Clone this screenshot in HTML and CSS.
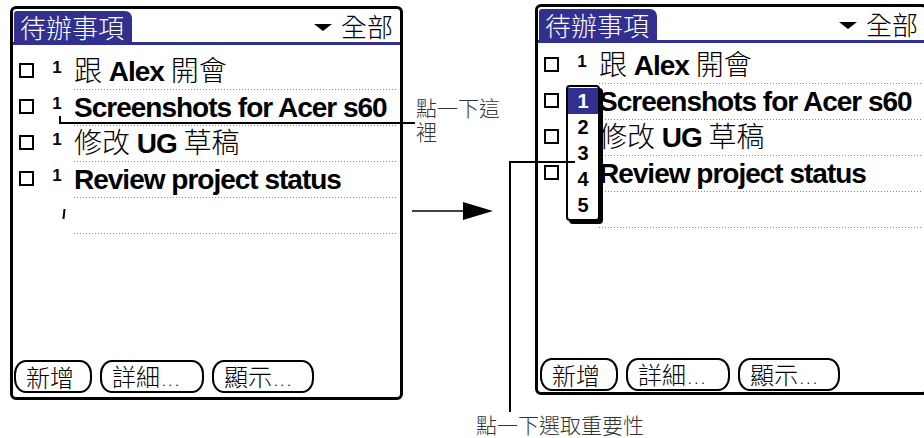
FILE: index.html
```html
<!DOCTYPE html>
<html>
    <head>
        <meta charset="UTF-8">
        <title>待辦事項 - 重要性</title>
        <link rel="stylesheet" href="styles.css">
    </head>
    <body>
        <div class="figure">
            <!-- before: tap the priority -->
            <div class="screen screen-before">
                <div class="titlebar">
                    <div class="title-tab">待辦事項</div>
                    <div class="category"><span class="caret"></span>全部</div>
                </div>
                <ul class="todo-list">
                    <li class="todo"><span class="check"></span><span class="prio">1</span><span class="desc"><span class="cjk">跟</span> Alex <span class="cjk">開會</span></span></li>
                    <li class="todo"><span class="check"></span><span class="prio">1</span><span class="desc">Screenshots for Acer s60</span></li>
                    <li class="todo"><span class="check"></span><span class="prio">1</span><span class="desc"><span class="cjk">修改</span> UG <span class="cjk">草稿</span></span></li>
                    <li class="todo"><span class="check"></span><span class="prio">1</span><span class="desc">Review project status</span></li>
                    <li class="todo todo-empty"><span class="blank"></span><span class="prio"><span class="cursor"></span></span><span class="desc"></span></li>
                </ul>
                <div class="buttons">
                    <button class="btn btn-new">新增</button>
                    <button class="btn btn-details">詳細<span class="more">...</span></button>
                    <button class="btn btn-show">顯示<span class="more">...</span></button>
                </div>
            </div>

            <!-- after: priority list open -->
            <div class="screen screen-after">
                <div class="titlebar">
                    <div class="title-tab">待辦事項</div>
                    <div class="category"><span class="caret"></span>全部</div>
                </div>
                <ul class="todo-list">
                    <li class="todo"><span class="check"></span><span class="prio">1</span><span class="desc"><span class="cjk">跟</span> Alex <span class="cjk">開會</span></span></li>
                    <li class="todo"><span class="check"></span><span class="prio">1</span><span class="desc">Screenshots for Acer s60</span></li>
                    <li class="todo"><span class="check"></span><span class="prio">1</span><span class="desc"><span class="cjk">修改</span> UG <span class="cjk">草稿</span></span></li>
                    <li class="todo"><span class="check"></span><span class="prio">1</span><span class="desc">Review project status</span></li>
                    <li class="todo todo-empty"><span class="blank"></span><span class="prio"></span><span class="desc"></span></li>
                </ul>
                <div class="buttons">
                    <button class="btn btn-new">新增</button>
                    <button class="btn btn-details">詳細<span class="more">...</span></button>
                    <button class="btn btn-show">顯示<span class="more">...</span></button>
                </div>
                <ul class="prio-popup">
                    <li class="selected">1</li>
                    <li>2</li>
                    <li>3</li>
                    <li>4</li>
                    <li>5</li>
                </ul>
            </div>

            <svg class="annotations" width="924" height="438" viewBox="0 0 924 438">
                <polyline points="60,116 60,123 415,123" fill="none" stroke="#000" stroke-width="2"/>
                <polyline points="575,162 510,162 510,412" fill="none" stroke="#000" stroke-width="2"/>
                <line x1="412" y1="211" x2="466" y2="211" stroke="#000" stroke-width="1.5"/>
                <polygon points="463,202 493,211 463,220" fill="#000"/>
            </svg>
            <div class="note note-tap">點一下這裡</div>
            <div class="note note-pick">點一下選取重要性</div>
        </div>
    </body>
</html>
```

FILE: styles.css
```css
body{
    margin:0;
    background-color:#fff;
    overflow:hidden;
    font-family:"Noto Sans CJK TC", sans-serif;
}

ul{
    list-style:none;
    margin:0;
    padding:0;
}

.figure{
    position:relative;
    width:924px;
    height:438px;
    display:flex;
    align-items:flex-start;
    overflow:hidden;
}

/* handheld screens */
.screen{
    position:relative;
    flex:none;
    box-sizing:border-box;
    width:393px;
    height:394px;
    border:3px solid #000;
    border-radius:6px;
    background-color:#fff;
    display:flex;
    flex-direction:column;
}

.screen-before{
    margin-left:10px;
    margin-top:6px;
}

.screen-after{
    margin-left:132px;
    margin-top:4px;
    height:391px;
}

.titlebar{
    display:flex;
    align-items:flex-end;
    justify-content:space-between;
    height:33px;
    padding-left:1px;
    padding-right:7px;
    border-bottom:3px solid #31308f;
}

.title-tab{
    box-sizing:border-box;
    width:118px;
    height:31px;
    padding-left:6px;
    background-color:#31308f;
    border-radius:3px 7px 0 0;
    color:#fff;
    font-size:26px;
    font-weight:300;
    line-height:31px;
}

.category{
    align-self:center;
    display:flex;
    align-items:center;
    font-size:26px;
    font-weight:300;
    line-height:30px;
    color:#000;
}

.caret{
    width:0;
    height:0;
    margin-right:9px;
    margin-top:3px;
    border-left:9px solid transparent;
    border-right:9px solid transparent;
    border-top:7px solid #000;
}

.todo-list{
    padding-top:9px;
}

.screen-after .todo-list{
    padding-top:5px;
}

.todo{
    display:flex;
    align-items:flex-start;
    height:36px;
}

.check,
.blank{
    flex:none;
    box-sizing:border-box;
    width:15px;
    height:15px;
    margin-left:6px;
    margin-top:9px;
    border:2px solid #000;
}

.blank{
    border-color:transparent;
}

.prio{
    flex:none;
    position:relative;
    width:22px;
    height:14px;
    margin-left:12px;
    margin-top:7px;
    font-family:"Liberation Sans", sans-serif;
    font-weight:bold;
    font-size:17px;
    line-height:14px;
    text-align:center;
}

.cursor{
    position:absolute;
    left:17px;
    top:4px;
    width:2px;
    height:10px;
    background-color:#000;
    transform:skewX(-6deg);
}

.desc{
    flex:1;
    height:35px;
    margin-left:6px;
    margin-right:3px;
    font-family:"Liberation Sans", sans-serif;
    font-weight:bold;
    font-size:28px;
    letter-spacing:-1px;
    line-height:35px;
    white-space:nowrap;
    color:#000;
    border-bottom:1px solid transparent;
    background-image:linear-gradient(to right, #8a8a8a 1px, transparent 1px);
    background-size:3px 1px;
    background-repeat:repeat-x;
    background-position:left bottom;
    background-origin:border-box;
}

.cjk{
    font-family:"Noto Sans CJK TC", sans-serif;
    font-weight:300;
    font-size:28px;
    letter-spacing:0;
    line-height:1;
}

.buttons{
    margin-top:auto;
    display:flex;
    gap:8px;
    padding-left:1px;
    padding-bottom:4px;
}

.screen-after .buttons{
    padding-left:2px;
    padding-bottom:1px;
}

.btn{
    box-sizing:border-box;
    height:33px;
    padding:0 0 0 10px;
    border:2px solid #000;
    border-radius:12px / 14px;
    background-color:#fff;
    color:#000;
    font-family:"Noto Sans CJK TC", sans-serif;
    font-weight:300;
    font-size:24px;
    line-height:28px;
    text-align:left;
    white-space:nowrap;
}

.btn-new{
    width:78px;
}

.btn-details{
    width:104px;
}

.btn-show{
    width:102px;
}

.more{
    font-family:"Liberation Sans", sans-serif;
    font-size:13px;
    letter-spacing:3px;
    margin-left:2px;
}

/* priority picker */
.prio-popup{
    position:absolute;
    left:28px;
    top:78px;
    box-sizing:border-box;
    width:34px;
    padding:1px 0;
    border:2px solid #000;
    border-radius:4px;
    background-color:#fff;
    box-shadow:3px 3px 0 #000;
}

.prio-popup li{
    height:26px;
    font-family:"Liberation Sans", sans-serif;
    font-weight:bold;
    font-size:20px;
    line-height:26px;
    text-align:center;
    color:#000;
}

.prio-popup .selected{
    background-color:#31308f;
    color:#fff;
}

/* callouts */
.annotations{
    position:absolute;
    left:0;
    top:0;
    pointer-events:none;
}

.note{
    position:absolute;
    font-family:"Noto Sans CJK TC", sans-serif;
    font-weight:300;
    font-size:21px;
    line-height:24px;
    color:#333;
}

.note-tap{
    left:416px;
    top:95px;
    width:86px;
}

.note-pick{
    left:476px;
    top:412px;
    white-space:nowrap;
}
```
